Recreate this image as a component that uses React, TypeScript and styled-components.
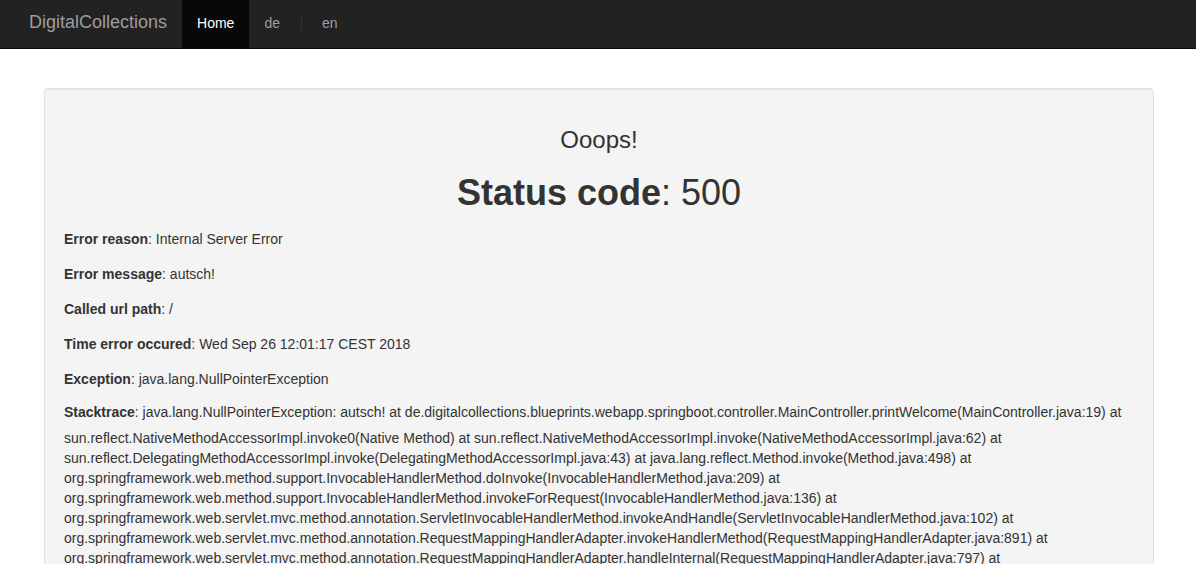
import React from "react";
import styled, { createGlobalStyle } from "styled-components";

const Global = createGlobalStyle`
  html, body { margin: 0; padding: 0; background: #fff; }
  body {
    font-family: "Liberation Sans", Arial, sans-serif;
    font-size: 14px;
    line-height: 20px;
    color: #333;
  }
  * { box-sizing: border-box; }
`;

const Navbar = styled.nav`
  height: 49px;
  background: #222;
  border-bottom: 1px solid #080808;
  display: flex;
  align-items: stretch;
  padding-left: 14px;
`;

const Brand = styled.a`
  display: flex;
  align-items: center;
  padding: 0 15px 4px 15px;
  font-size: 18px;
  color: #9d9d9d;
  text-decoration: none;
`;

const NavList = styled.ul`
  display: flex;
  list-style: none;
  margin: 0;
  padding: 0;
  align-items: stretch;
`;

const NavItem = styled.li<{ $active?: boolean }>`
  display: flex;
  align-items: center;
  padding: 0 15px 3px 15px;
  background: ${(p) => (p.$active ? "#080808" : "transparent")};
  color: ${(p) => (p.$active ? "#fff" : "#9d9d9d")};
`;

const Sep = styled.li`
  display: flex;
  align-items: center;
  padding-bottom: 3px;
  margin: 0 5px 0 6px;
  &::before {
    content: "";
    display: block;
    width: 1px;
    height: 14px;
    background: #333;
  }
`;

const Container = styled.main`
  padding: 39px 42px 0 44px;
`;

const Well = styled.section`
  background: #f4f4f4;
  border: 1px solid #e3e3e3;
  border-radius: 4px;
  box-shadow: inset 0 1px 1px rgba(0, 0, 0, 0.05);
  padding: 38px 19px 19px 19px;
`;

const Oops = styled.h3`
  margin: 0;
  text-align: center;
  font-size: 24px;
  font-weight: 400;
  line-height: 26px;
`;

const Status = styled.h1`
  margin: 20px 0 0 0;
  text-align: center;
  font-size: 36px;
  font-weight: 400;
  line-height: 40px;
  b { font-weight: 700; }
`;

const InfoList = styled.div`
  margin-top: 16px;
  display: flex;
  flex-direction: column;
  gap: 15px;
`;

const Info = styled.p`
  margin: 0;
  line-height: 20px;
  b { font-weight: 700; }
`;

const Trace = styled.div`
  margin-top: 13px;
  b { font-weight: 700; }
`;

const TraceFirst = styled.div`
  line-height: 20px;
  white-space: nowrap;
`;

const TraceLine = styled.div<{ $first?: boolean }>`
  line-height: 20px;
  white-space: nowrap;
  margin-top: ${(p) => (p.$first ? "6px" : "0")};
`;

const info: [string, string][] = [
  ["Error reason", "Internal Server Error"],
  ["Error message", "autsch!"],
  ["Called url path", "/"],
  ["Time error occured", "Wed Sep 26 12:01:17 CEST 2018"],
  ["Exception", "java.lang.NullPointerException"],
];

const traceLines = [
  "sun.reflect.NativeMethodAccessorImpl.invoke0(Native Method) at sun.reflect.NativeMethodAccessorImpl.invoke(NativeMethodAccessorImpl.java:62) at",
  "sun.reflect.DelegatingMethodAccessorImpl.invoke(DelegatingMethodAccessorImpl.java:43) at java.lang.reflect.Method.invoke(Method.java:498) at",
  "org.springframework.web.method.support.InvocableHandlerMethod.doInvoke(InvocableHandlerMethod.java:209) at",
  "org.springframework.web.method.support.InvocableHandlerMethod.invokeForRequest(InvocableHandlerMethod.java:136) at",
  "org.springframework.web.servlet.mvc.method.annotation.ServletInvocableHandlerMethod.invokeAndHandle(ServletInvocableHandlerMethod.java:102) at",
  "org.springframework.web.servlet.mvc.method.annotation.RequestMappingHandlerAdapter.invokeHandlerMethod(RequestMappingHandlerAdapter.java:891) at",
  "org.springframework.web.servlet.mvc.method.annotation.RequestMappingHandlerAdapter.handleInternal(RequestMappingHandlerAdapter.java:797) at",
];

export default function App() {
  return (
    <>
      <Global />
      <Navbar>
        <Brand href="#">DigitalCollections</Brand>
        <NavList>
          <NavItem $active>Home</NavItem>
          <NavItem>de</NavItem>
          <Sep />
          <NavItem>en</NavItem>
        </NavList>
      </Navbar>
      <Container>
        <Well>
          <Oops>Ooops!</Oops>
          <Status>
            <b>Status code</b>: 500
          </Status>
          <InfoList>
            {info.map(([k, v]) => (
              <Info key={k}>
                <b>{k}</b>: {v}
              </Info>
            ))}
          </InfoList>
          <Trace>
            <TraceFirst>
              <b>Stacktrace</b>: java.lang.NullPointerException: autsch! at
              de.digitalcollections.blueprints.webapp.springboot.controller.MainController.printWelcome(MainController.java:19)
              at
            </TraceFirst>
            {traceLines.map((l, i) => (
              <TraceLine key={i} $first={i === 0}>
                {l}
              </TraceLine>
            ))}
          </Trace>
        </Well>
      </Container>
    </>
  );
}
